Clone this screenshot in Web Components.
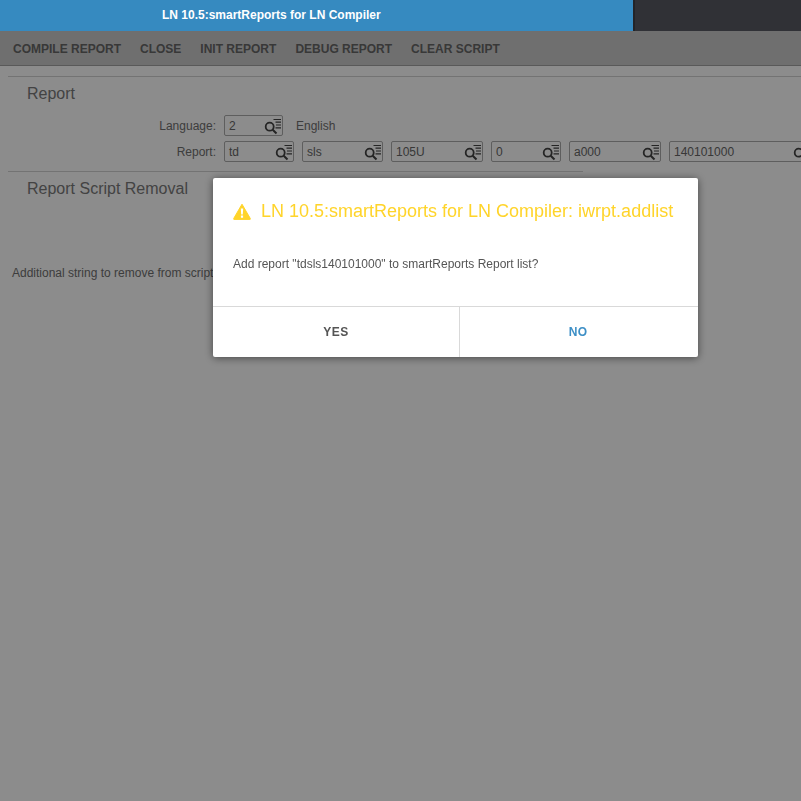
<!DOCTYPE html>
<html><head><meta charset="utf-8">
<style>
html,body{margin:0;height:100%;overflow:hidden;background:#fff}
body{font:12px "Liberation Sans",Arial,sans-serif;color:#5a5a5a}
</style></head>
<body>
<template id="t-field"><style>
:host{display:block;box-sizing:border-box;height:21px;flex:none;border:1px solid #ababab;border-radius:2px}
.w{display:flex;align-items:center;height:100%;padding-left:4px;font-size:12px;color:#666}
span{flex:1}
svg{flex:none;width:18px;height:18px}
</style><div class="w"><span><slot></slot></span><svg viewBox="0 0 18 18" fill="none" stroke="#444"><circle cx="5.700" cy="9.700" r="4" stroke-width="1.800"/><path d="M8.700 12.700l3.800 3.800" stroke-width="2"/><path d="M9.500 2.500h7.500M11.500 5.200h5.500M12 8h5M11.500 10.800h5.500" stroke-width="1.200"/></svg></div></template>
<script>
const T=(id)=>document.getElementById(id);
class LnField extends HTMLElement{constructor(){super();this.attachShadow({mode:'open'}).appendChild(T('t-field').content.cloneNode(true));}}
customElements.define('ln-field',LnField);
function def(name,html){customElements.define(name,class extends HTMLElement{constructor(){super();this.attachShadow({mode:'open'}).innerHTML=html;}});}
def('ln-titlebar',`<style>:host{display:flex;height:31px;background:#303136}
.b{width:633px;box-sizing:border-box;background:#368ac0;padding-left:162px;color:#fff;font:bold 12px/31px "Liberation Sans",sans-serif}
.s{width:2px;background:#232428}</style><div class="b"><slot></slot></div><div class="s"></div>`);
def('ln-toolbar',`<style>:host{display:flex;box-sizing:border-box;height:35px;background:#cbcbcb;border-bottom:1px solid #a3a3a3;padding:2px 0 0 13px;gap:19px;align-items:center;font:bold 12px "Liberation Sans",sans-serif;color:#666}</style><slot></slot>`);
def('ln-section',`<style>:host{display:block;box-sizing:border-box;border-top:1px solid #d2d2d2;margin-left:8px}
h2{margin:0;font:normal 16px/18px "Liberation Sans",sans-serif;color:#7a7a7a;padding:8px 0 0 19px}</style><h2><slot name="h"></slot></h2><slot></slot>`);
def('ln-row',`<style>:host{display:flex;align-items:center;gap:8px;height:21px}
.l{width:216px;text-align:right;flex:none;color:#6f6f6f}</style><div class="l"><slot name="l"></slot></div><slot></slot>`);
def('ln-overlay',`<style>:host{position:fixed;left:0;right:0;top:31px;bottom:0;background:rgba(0,0,0,.45)}</style><slot></slot>`);
def('ln-dialog',`<style>:host{position:fixed;left:213px;top:178px;width:485px;height:179px;box-sizing:border-box;background:#fff;border-radius:2px;box-shadow:0 1px 8px rgba(0,0,0,.5);display:flex;flex-direction:column}
.h{display:flex;align-items:center;gap:10px;height:20px;margin:23px 20px 0;color:#ffd42a;font-size:18px;white-space:nowrap}
svg{width:18px;height:17px;flex:none}
.m{margin:33px 20px 0;height:20px;font-size:12px;line-height:20px;color:#555;flex:1}
.f{display:grid;grid-template-columns:246px 1fr;height:51px;border-top:1px solid #d9d9d9;box-sizing:border-box}
.f div{display:flex;align-items:center;justify-content:center;font:bold 12px "Liberation Sans",sans-serif;letter-spacing:.5px;color:#555}
.f div+div{border-left:1px solid #d9d9d9;color:#3d8fc6;letter-spacing:.2px;padding-right:2px}
</style><div class="h"><svg viewBox="0 0 18 17"><path d="M9 1.200 17.300 15.500a.8.8 0 0 1-.7 1.200H1.400a.8.8 0 0 1-.7-1.200z" fill="#ffd42a" stroke="#ffd42a" stroke-linejoin="round"/><path d="M7.800 5.500h2.400l-.4 6H8.200zM7.900 12.600h2.200v2.200H7.900z" fill="#fff"/></svg><slot name="title"></slot></div>
<div class="m"><slot></slot></div><div class="f"><div><slot name="yes"></slot></div><div><slot name="no"></slot></div></div>`);
</script>
<ln-titlebar>LN 10.5:smartReports for LN Compiler</ln-titlebar>
<ln-toolbar><span>COMPILE REPORT</span><span>CLOSE</span><span>INIT REPORT</span><span>DEBUG REPORT</span><span>CLEAR SCRIPT</span></ln-toolbar>
<div style="height:10px"></div>
<ln-section style="height:95px">
  <span slot="h">Report</span>
  <div style="height:12px"></div>
  <div style="margin-left:-8px;display:flex;flex-direction:column;gap:5px;width:801px;overflow:hidden">
    <ln-row><span slot="l">Language:</span><ln-field style="width:59px">2</ln-field><span style="margin-left:5px;color:#6f6f6f">English</span></ln-row>
    <ln-row><span slot="l">Report:</span><ln-field style="width:70px">td</ln-field><ln-field style="width:81px">sls</ln-field><ln-field style="width:92px">105U</ln-field><ln-field style="width:70px">0</ln-field><ln-field style="width:92px">a000</ln-field><ln-field style="width:143px">140101000</ln-field></ln-row>
  </div>
</ln-section>
<ln-section style="width:575px">
  <span slot="h">Report Script Removal</span>
  <div style="margin:67px 0 0 4px;font-size:12px;line-height:16px;color:#6f6f6f;white-space:nowrap">Additional string to remove from script</div>
</ln-section>
<ln-overlay></ln-overlay>
<ln-dialog>
  <span slot="title">LN 10.5:smartReports for LN Compiler: iwrpt.addlist</span>
  Add report "tdsls140101000" to smartReports Report list?
  <span slot="yes">YES</span><span slot="no">NO</span>
</ln-dialog>
</body></html>
